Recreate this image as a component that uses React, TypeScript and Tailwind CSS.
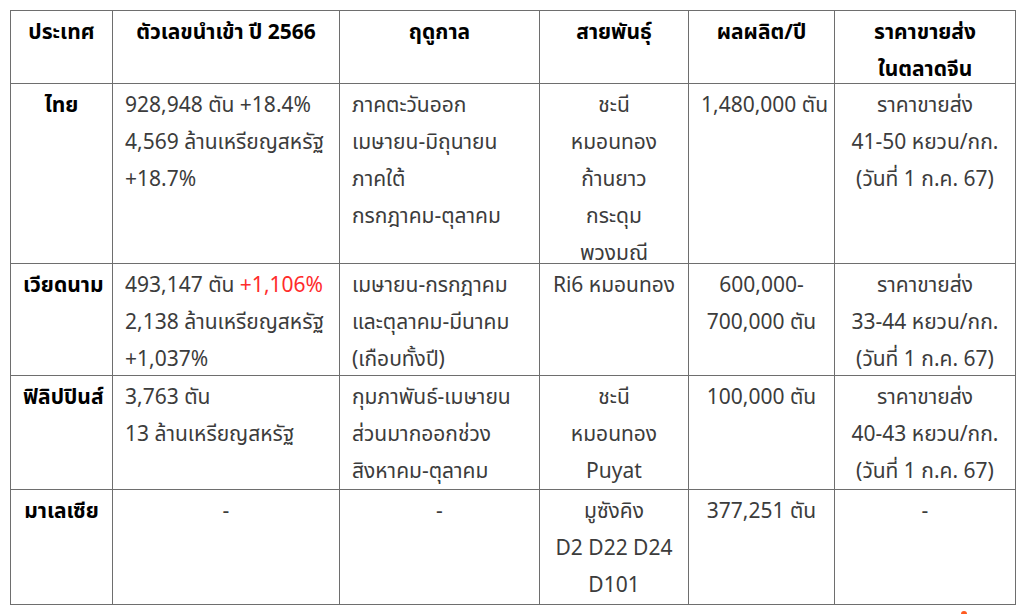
import React from "react";

interface Row {
  country: string;
  imports: React.ReactNode[];
  season: string[];
  varieties: string[];
  output: string[];
  price: string[];
  height: string;
}

const rows: Row[] = [
  {
    country: "ไทย",
    imports: ["928,948 ตัน +18.4%", "4,569 ล้านเหรียญสหรัฐ", "+18.7%"],
    season: ["ภาคตะวันออก", "เมษายน-มิถุนายน", "ภาคใต้", "กรกฎาคม-ตุลาคม"],
    varieties: ["ชะนี", "หมอนทอง", "ก้านยาว", "กระดุม", "พวงมณี"],
    output: ["1,480,000 ตัน"],
    price: ["ราคาขายส่ง", "41-50 หยวน/กก.", "(วันที่ 1 ก.ค. 67)"],
    height: "h-[180px]",
  },
  {
    country: "เวียดนาม",
    imports: [
      <>
        493,147 ตัน <span className="text-[#ff2b2b]">+1,106%</span>
      </>,
      "2,138 ล้านเหรียญสหรัฐ",
      "+1,037%",
    ],
    season: ["เมษายน-กรกฎาคม", "และตุลาคม-มีนาคม", "(เกือบทั้งปี)"],
    varieties: ["Ri6 หมอนทอง"],
    output: ["600,000-", "700,000 ตัน"],
    price: ["ราคาขายส่ง", "33-44 หยวน/กก.", "(วันที่ 1 ก.ค. 67)"],
    height: "h-[112px]",
  },
  {
    country: "ฟิลิปปินส์",
    imports: ["3,763 ตัน", "13 ล้านเหรียญสหรัฐ"],
    season: ["กุมภาพันธ์-เมษายน", "ส่วนมากออกช่วง", "สิงหาคม-ตุลาคม"],
    varieties: ["ชะนี", "หมอนทอง", "Puyat"],
    output: ["100,000 ตัน"],
    price: ["ราคาขายส่ง", "40-43 หยวน/กก.", "(วันที่ 1 ก.ค. 67)"],
    height: "h-[114px]",
  },
  {
    country: "มาเลเซีย",
    imports: ["-"],
    season: ["-"],
    varieties: ["มูซังคิง", "D2 D22 D24", "D101"],
    output: ["377,251 ตัน"],
    price: ["-"],
    height: "h-[115px]",
  },
];

const cell = "border border-[#6e6e6e] align-top px-3 py-0";

// lines sit a little low and spill past the cell, as in the source doc
function Lines({ items }: { items: React.ReactNode[] }) {
  return (
    <div className="pt-[3px] -mb-[10px]">
      {items.map((t, i) => (
        <div key={i} className="whitespace-nowrap">
          {t}
        </div>
      ))}
    </div>
  );
}

export default function App() {
  return (
    <div
      className="w-[1024px] h-[614px] overflow-hidden bg-white pt-[10px] pl-[10px] text-[#3c3c3c] text-[21px] leading-[37px]"
      style={{ fontFamily: '"Noto Sans Thai", "Noto Sans", Tahoma, sans-serif' }}
    >
      <table className="border-collapse table-fixed w-[1005px]">
        <colgroup>
          <col className="w-[102px]" />
          <col className="w-[227px]" />
          <col className="w-[200px]" />
          <col className="w-[149px]" />
          <col className="w-[146px]" />
          <col className="w-[181px]" />
        </colgroup>
        <thead>
          <tr className="h-[73px] text-black font-bold">
            <th className={cell + " text-center"}>
              <Lines items={["ประเทศ"]} />
            </th>
            <th className={cell + " text-center"}>
              <Lines items={["ตัวเลขนำเข้า ปี 2566"]} />
            </th>
            <th className={cell + " text-center"}>
              <Lines items={["ฤดูกาล"]} />
            </th>
            <th className={cell + " text-center"}>
              <Lines items={["สายพันธุ์"]} />
            </th>
            <th className={cell + " text-center"}>
              <Lines items={["ผลผลิต/ปี"]} />
            </th>
            <th className={cell + " text-center"}>
              <Lines items={["ราคาขายส่ง", "ในตลาดจีน"]} />
            </th>
          </tr>
        </thead>
        <tbody>
          {rows.map((r) => (
            <tr key={r.country} className={r.height}>
              <td className={cell + " text-center font-bold text-black px-1"}>
                <Lines items={[r.country]} />
              </td>
              <td className={cell + (r.imports[0] === "-" ? " text-center" : " text-left")}>
                <Lines items={r.imports} />
              </td>
              <td className={cell + (r.season[0] === "-" ? " text-center" : " text-left")}>
                <Lines items={r.season} />
              </td>
              <td className={cell + " text-center"}>
                <Lines items={r.varieties} />
              </td>
              <td className={cell + " text-center"}>
                <Lines items={r.output} />
              </td>
              <td className={cell + " text-center"}>
                <Lines items={r.price} />
              </td>
            </tr>
          ))}
        </tbody>
      </table>
      <div className="w-[1005px] flex justify-end pr-[48px] mt-[6px]">
        <div className="w-[6px] h-[4px] rounded-t-sm bg-[#ff5a1f]" />
      </div>
    </div>
  );
}
